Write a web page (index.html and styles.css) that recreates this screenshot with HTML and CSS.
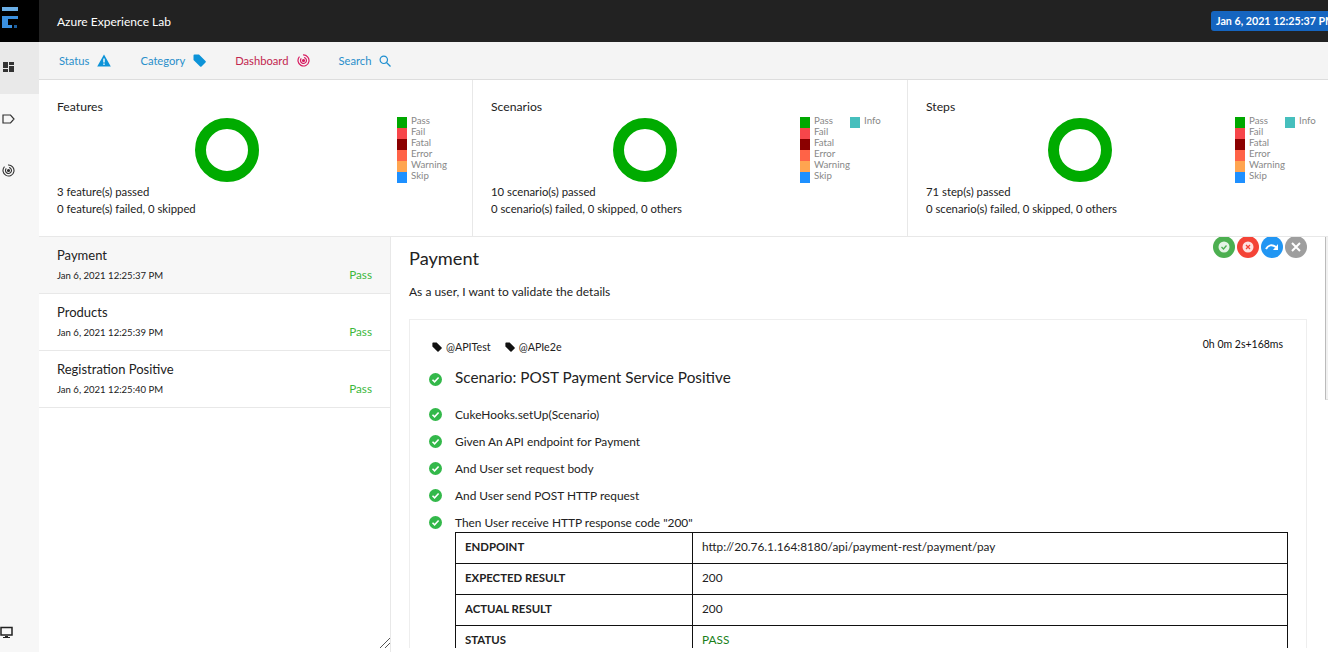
FILE: index.html
```html
<!DOCTYPE html>
<html lang="en">
<head>
    <meta charset="UTF-8">
    <title>Azure Experience Lab</title>
    <link rel="stylesheet" href="styles.css">
</head>
<body>
    <div class="page">
        <aside class="sidenav">
            <div class="logo">
                <svg width="22" height="30" viewBox="0 0 22 30">
                    <rect x="2" y="7" width="16" height="4" fill="#6aaee6"/>
                    <rect x="2" y="16" width="6" height="12" fill="#3a90e0"/>
                    <rect x="8" y="16" width="10" height="3" fill="#3a90e0"/>
                    <rect x="8" y="25" width="4" height="3" fill="#3a90e0"/>
                    <rect x="14" y="25" width="3" height="3" fill="#1c5f9e"/>
                </svg>
            </div>
            <a class="nav-item active">
                <svg width="13" height="12" viewBox="0 0 13 12"><path d="M1 1h5v6H1zM1 8h5v3H1zM7 1h5v3H7zM7 5h5v6H7z" fill="#333"/></svg>
            </a>
            <a class="nav-item">
                <svg width="13" height="10" viewBox="0 0 13 10"><path d="M1 1h7.500L12 5 8.500 9H1z" fill="none" stroke="#333" stroke-width="1.200"/></svg>
            </a>
            <a class="nav-item">
                <svg width="13" height="13" viewBox="0 0 13 13" fill="none" stroke="#333" stroke-width="1.100"><path d="M6 1A5.500 5.500 0 1 1 2.500 2.700"/><path d="M7 3.500A3 3 0 1 1 4.300 4.400"/><circle cx="6.500" cy="6.500" r="1" fill="#333"/></svg>
            </a>
            <a class="nav-bottom">
                <svg width="13" height="13" viewBox="0 0 13 13"><path d="M1 1.500h11v7.500H1z" fill="none" stroke="#222" stroke-width="1.500"/><path d="M5 10h3v1h2v1H3v-1h2z" fill="#222"/></svg>
            </a>
        </aside>

        <div class="main">
            <header class="topbar">
                <span class="brand">Azure Experience Lab</span>
                <span class="run-date">Jan 6, 2021 12:25:37 PM</span>
            </header>

            <nav class="tabs">
                <a class="tab">Status
                    <svg width="14" height="13" viewBox="0 0 14 13"><path d="M7 .5L13.800 12.500H.2z" fill="#0c93d8"/><rect x="6.300" y="4.500" width="1.400" height="4" fill="#fff"/><rect x="6.300" y="9.500" width="1.400" height="1.400" fill="#fff"/></svg>
                </a>
                <a class="tab">Category
                    <svg width="13" height="13" viewBox="0 0 13 13"><path d="M.5 1.500A1 1 0 0 1 1.500.5H6l6.500 6.500a1 1 0 0 1 0 1.400l-4 4a1 1 0 0 1-1.400 0L.5 6z" fill="#0c93d8"/></svg>
                </a>
                <a class="tab tab-dash">Dashboard
                    <svg width="13" height="13" viewBox="0 0 13 13" fill="none" stroke="#d81b60" stroke-width="1.200"><path d="M6 1A5.500 5.500 0 1 1 2.500 2.700"/><path d="M7 3.500A3 3 0 1 1 4.300 4.400"/><circle cx="6.500" cy="6.500" r="1" fill="#d81b60"/></svg>
                </a>
                <a class="tab">Search
                    <svg width="12" height="12" viewBox="0 0 12 12" fill="none" stroke="#1f8fd0" stroke-width="1.200"><circle cx="4.800" cy="4.800" r="3.700"/><path d="M7.500 7.500l4 4"/></svg>
                </a>
            </nav>

            <section class="stats">
                <div class="stat-card stat-features">
                    <h4 class="stat-title">Features</h4>
                    <div class="stat-chart">
                        <div class="donut"></div>
                        <ul class="legend">
                            <li><i class="sw pass"></i>Pass</li>
                            <li><i class="sw fail"></i>Fail</li>
                            <li><i class="sw fatal"></i>Fatal</li>
                            <li><i class="sw error"></i>Error</li>
                            <li><i class="sw warning"></i>Warning</li>
                            <li><i class="sw skip"></i>Skip</li>
                        </ul>
                    </div>
                    <p class="stat-line">3 feature(s) passed</p>
                    <p class="stat-line">0 feature(s) failed, 0 skipped</p>
                </div>
                <div class="stat-card">
                    <h4 class="stat-title">Scenarios</h4>
                    <div class="stat-chart">
                        <div class="donut"></div>
                        <ul class="legend">
                            <li><i class="sw pass"></i>Pass</li>
                            <li><i class="sw fail"></i>Fail</li>
                            <li><i class="sw fatal"></i>Fatal</li>
                            <li><i class="sw error"></i>Error</li>
                            <li><i class="sw warning"></i>Warning</li>
                            <li><i class="sw skip"></i>Skip</li>
                        </ul>
                        <div class="legend-info"><i class="sw info"></i>Info</div>
                    </div>
                    <p class="stat-line">10 scenario(s) passed</p>
                    <p class="stat-line">0 scenario(s) failed, 0 skipped, 0 others</p>
                </div>
                <div class="stat-card">
                    <h4 class="stat-title">Steps</h4>
                    <div class="stat-chart">
                        <div class="donut"></div>
                        <ul class="legend">
                            <li><i class="sw pass"></i>Pass</li>
                            <li><i class="sw fail"></i>Fail</li>
                            <li><i class="sw fatal"></i>Fatal</li>
                            <li><i class="sw error"></i>Error</li>
                            <li><i class="sw warning"></i>Warning</li>
                            <li><i class="sw skip"></i>Skip</li>
                        </ul>
                        <div class="legend-info"><i class="sw info"></i>Info</div>
                    </div>
                    <p class="stat-line">71 step(s) passed</p>
                    <p class="stat-line">0 scenario(s) failed, 0 skipped, 0 others</p>
                </div>
            </section>

            <section class="content">
                <div class="test-list">
                    <div class="test-item active">
                        <div class="test-name">Payment</div>
                        <div class="test-meta"><span>Jan 6, 2021 12:25:37 PM</span><span class="pass-text">Pass</span></div>
                    </div>
                    <div class="test-item">
                        <div class="test-name">Products</div>
                        <div class="test-meta"><span>Jan 6, 2021 12:25:39 PM</span><span class="pass-text">Pass</span></div>
                    </div>
                    <div class="test-item">
                        <div class="test-name">Registration Positive</div>
                        <div class="test-meta"><span>Jan 6, 2021 12:25:40 PM</span><span class="pass-text">Pass</span></div>
                    </div>
                    <svg class="grip" width="10" height="10" viewBox="0 0 10 10" fill="none" stroke="#555"><path d="M0 10L10 0M5 10L10 5"/></svg>
                </div>

                <div class="detail">
                    <div class="filters">
                        <span class="fbtn f-pass"><svg width="12" height="12" viewBox="0 0 12 12"><circle cx="6" cy="6" r="5.500" fill="#fff" opacity=".85"/><path d="M3.500 6l2 2 3-3.500" fill="none" stroke="#4caf50" stroke-width="1.300"/></svg></span>
                        <span class="fbtn f-fail"><svg width="12" height="12" viewBox="0 0 12 12"><circle cx="6" cy="6" r="5.500" fill="#fff" opacity=".85"/><path d="M4 4l4 4M8 4l-4 4" stroke="#f44336" stroke-width="1.300"/></svg></span>
                        <span class="fbtn f-skip"><svg width="14" height="10" viewBox="0 0 14 10"><path d="M1 7c2-4 6-5 10-2" fill="none" stroke="#fff" stroke-width="2"/><path d="M13 2v6H8z" fill="#fff"/></svg></span>
                        <span class="fbtn f-clear"><svg width="12" height="12" viewBox="0 0 12 12"><path d="M2 2l8 8M10 2l-8 8" stroke="#fff" stroke-width="2"/></svg></span>
                    </div>
                    <h5 class="detail-title">Payment</h5>
                    <p class="detail-desc">As a user, I want to validate the details</p>

                    <div class="scenario-card">
                        <div class="scenario-top">
                            <div class="tags">
                                <span class="tag"><svg width="10" height="10" viewBox="0 0 13 13"><path d="M.5 1.500A1 1 0 0 1 1.500.5H6l6.500 6.500a1 1 0 0 1 0 1.400l-4 4a1 1 0 0 1-1.400 0L.5 6z" fill="#111"/></svg>@APITest</span>
                                <span class="tag"><svg width="10" height="10" viewBox="0 0 13 13"><path d="M.5 1.500A1 1 0 0 1 1.500.5H6l6.500 6.500a1 1 0 0 1 0 1.400l-4 4a1 1 0 0 1-1.400 0L.5 6z" fill="#111"/></svg>@APIe2e</span>
                            </div>
                            <span class="duration">0h 0m 2s+168ms</span>
                        </div>
                        <div class="row scenario-name">
                            <svg class="ok" width="13" height="13" viewBox="0 0 13 13"><circle cx="6.500" cy="6.500" r="6.500" fill="#33b84a"/><path d="M3.500 6.700l2.100 2.100 4-4.300" fill="none" stroke="#fff" stroke-width="1.600"/></svg>
                            <span>Scenario: POST Payment Service Positive</span>
                        </div>
                        <div class="row step">
                            <svg class="ok" width="13" height="13" viewBox="0 0 13 13"><circle cx="6.500" cy="6.500" r="6.500" fill="#33b84a"/><path d="M3.500 6.700l2.100 2.100 4-4.300" fill="none" stroke="#fff" stroke-width="1.600"/></svg>
                            <span>CukeHooks.setUp(Scenario)</span>
                        </div>
                        <div class="row step">
                            <svg class="ok" width="13" height="13" viewBox="0 0 13 13"><circle cx="6.500" cy="6.500" r="6.500" fill="#33b84a"/><path d="M3.500 6.700l2.100 2.100 4-4.300" fill="none" stroke="#fff" stroke-width="1.600"/></svg>
                            <span>Given An API endpoint for Payment</span>
                        </div>
                        <div class="row step">
                            <svg class="ok" width="13" height="13" viewBox="0 0 13 13"><circle cx="6.500" cy="6.500" r="6.500" fill="#33b84a"/><path d="M3.500 6.700l2.100 2.100 4-4.300" fill="none" stroke="#fff" stroke-width="1.600"/></svg>
                            <span>And User set request body</span>
                        </div>
                        <div class="row step">
                            <svg class="ok" width="13" height="13" viewBox="0 0 13 13"><circle cx="6.500" cy="6.500" r="6.500" fill="#33b84a"/><path d="M3.500 6.700l2.100 2.100 4-4.300" fill="none" stroke="#fff" stroke-width="1.600"/></svg>
                            <span>And User send POST HTTP request</span>
                        </div>
                        <div class="row step">
                            <svg class="ok" width="13" height="13" viewBox="0 0 13 13"><circle cx="6.500" cy="6.500" r="6.500" fill="#33b84a"/><path d="M3.500 6.700l2.100 2.100 4-4.300" fill="none" stroke="#fff" stroke-width="1.600"/></svg>
                            <span>Then User receive HTTP response code "200"</span>
                        </div>
                        <table class="result">
                            <tr><th>ENDPOINT</th><td>http://20.76.1.164:8180/api/payment-rest/payment/pay</td></tr>
                            <tr><th>EXPECTED RESULT</th><td>200</td></tr>
                            <tr><th>ACTUAL RESULT</th><td>200</td></tr>
                            <tr><th>STATUS</th><td class="status-pass">PASS</td></tr>
                        </table>
                    </div>
                </div>
                <div class="scroll-line"></div>
            </section>
        </div>
    </div>
</body>
</html>
```

FILE: styles.css
```css
* {
    box-sizing: border-box;
}
html, body {
    height: 100%;
}
body {
    margin: 0;
    overflow: hidden;
    background-color: #fff;
    color: #222;
    font-family: Lato, "Noto Sans", Arial, sans-serif;
    font-size: 12px;
}
.page {
    display: flex;
    height: 652px;
    overflow: hidden;
}

/* left icons */
.sidenav {
    width: 39px;
    flex: none;
    display: flex;
    flex-direction: column;
    background-color: #f7f7f7;
}
.logo {
    height: 42px;
    background-color: #000;
    display: flex;
}
.nav-item {
    height: 52px;
    display: flex;
    justify-content: center;
    align-items: center;
    padding: 0 22px 3px 0;
}
.nav-item.active {
    background-color: #e9e9e9;
}
.nav-bottom {
    margin-top: auto;
    height: 26px;
}

.main {
    flex: 1;
    min-width: 0;
    display: flex;
    flex-direction: column;
}
.topbar {
    height: 42px;
    flex: none;
    background-color: #222;
    display: flex;
    justify-content: space-between;
    align-items: center;
    padding-left: 18px;
    color: #fff;
}
.brand {
    font-size: 12px;
}
.run-date {
    width: 117px;
    height: 20px;
    margin-top: -1px;
    padding: 3px 0 0 5px;
    border-radius: 3px 0 0 3px;
    background-color: #1565c0;
    font-size: 10.700px;
    font-weight: 700;
    white-space: nowrap;
    overflow: hidden;
}

.tabs {
    height: 38px;
    flex: none;
    display: flex;
    align-items: center;
    padding-left: 20px;
    gap: 29px;
    background-color: #f4f4f4;
    border-bottom: 1px solid #ddd;
}
.tab {
    display: flex;
    align-items: center;
    gap: 8px;
    color: #2a8fcb;
    font-size: 11.200px;
}
.tab-dash {
    color: #c2274f;
}

/* stat cards */
.stats {
    height: 157px;
    flex: none;
    display: flex;
    border-bottom: 1px solid #e8e8e8;
}
.stat-card {
    width: 435px;
    flex: none;
    padding: 18px 18px 0;
    border-right: 1px solid #e8e8e8;
}
.stat-features {
    width: 434px;
}
.stat-title {
    margin: 0;
    font-size: 12.200px;
    font-weight: 400;
    line-height: 17px;
}
.stat-chart {
    position: relative;
    height: 68px;
}
.donut {
    position: absolute;
    left: 122px;
    top: 3px;
    width: 64px;
    height: 64px;
    border: 11px solid #00ab00;
    border-radius: 50%;
}
.stat-features .donut {
    left: 138px;
}
.legend {
    position: absolute;
    left: 309px;
    top: 2px;
    margin: 0;
    padding: 0;
    list-style: none;
    color: #888;
    font-size: 9.700px;
}
.stat-features .legend {
    left: 340px;
}
.legend li {
    display: flex;
    align-items: flex-start;
    height: 11px;
    line-height: 6px;
}
.sw {
    display: block;
    width: 10px;
    height: 11px;
    margin-right: 4px;
}
.pass { background-color: #00a800; }
.fail { background-color: #f7464a; }
.fatal { background-color: #8b0000; }
.error { background-color: #ff6347; }
.warning { background-color: #ffa550; }
.skip { background-color: #1e90ff; }
.info { background-color: #46bfbd; }
.legend-info {
    position: absolute;
    left: 359px;
    top: 2px;
    display: flex;
    align-items: flex-start;
    height: 11px;
    line-height: 6px;
    color: #888;
    font-size: 9.700px;
}
.stat-line {
    margin: 0;
    font-size: 11.300px;
    line-height: 17px;
}

/* list + detail */
.content {
    position: relative;
    flex: 1;
    display: flex;
    min-height: 0;
}
.test-list {
    position: relative;
    width: 352px;
    flex: none;
    border-right: 1px solid #e8e8e8;
}
.test-item {
    height: 57px;
    padding: 10px 18px 0;
    border-bottom: 1px solid #e8e8e8;
}
.test-item.active {
    background-color: #f7f7f7;
}
.test-name {
    font-size: 13px;
    line-height: 16px;
}
.test-meta {
    display: flex;
    justify-content: space-between;
    align-items: center;
    margin-top: 5px;
    font-size: 9.550px;
    line-height: 16px;
}
.pass-text {
    color: #3cb83c;
    font-size: 11.700px;
    line-height: 14px;
    margin-top: -4px;
}
.grip {
    position: absolute;
    right: 0;
    bottom: 4px;
}

.detail {
    position: relative;
    flex: 1;
    min-width: 0;
    height: 411px;
    overflow: hidden;
    padding: 11px 21px 0 18px;
}
.filters {
    position: absolute;
    top: -1px;
    right: 21px;
    display: flex;
    gap: 2px;
}
.fbtn {
    width: 22px;
    height: 22px;
    border-radius: 50%;
    display: flex;
    align-items: center;
    justify-content: center;
}
.f-pass { background-color: #4caf50; }
.f-fail { background-color: #f44336; }
.f-skip { background-color: #2196f3; }
.f-clear { background-color: #9e9e9e; }
.detail-title {
    margin: 0;
    font-size: 18.200px;
    font-weight: 400;
    line-height: 20px;
}
.detail-desc {
    margin: 16px 0 0;
    line-height: 16px;
}
.scenario-card {
    margin-top: 19px;
    padding: 19px 23px 0 16px;
    border: 1px solid #eee;
    height: 360px;
}
.scenario-top {
    display: flex;
    justify-content: space-between;
    align-items: flex-start;
    padding-left: 6px;
}
.tags {
    display: flex;
    gap: 14px;
    font-size: 10.700px;
    line-height: 16px;
}
.tag {
    display: flex;
    align-items: center;
    gap: 4px;
}
.duration {
    margin-top: -2px;
    color: #111;
    font-size: 10.500px;
    line-height: 14px;
}
.row {
    display: flex;
    align-items: center;
    gap: 13px;
    padding-left: 3px;
}
.ok {
    flex: none;
}
.scenario-name {
    height: 28px;
    margin-top: 8px;
    margin-bottom: 10px;
    font-size: 15.300px;
}
.scenario-name .ok {
    margin-top: 4px;
}
.step {
    height: 27px;
    font-size: 11.900px;
}
.result {
    width: 833px;
    margin: -4px 0 0 29px;
    border-collapse: collapse;
}
.result th, .result td {
    height: 31px;
    padding: 0 9px 3px;
    border: 1px solid #111;
    text-align: left;
}
.result th {
    width: 237px;
    font-size: 11.400px;
    font-weight: 700;
}
.result td {
    font-size: 11.800px;
}
.status-pass {
    color: #1a7f1a;
}
.scroll-line {
    position: absolute;
    top: 0;
    right: 0;
    width: 3px;
    height: 163px;
    background-color: #f1f1f1;
    border-left: 1px solid #bbb;
    border-bottom: 1px solid #ddd;
}
```
